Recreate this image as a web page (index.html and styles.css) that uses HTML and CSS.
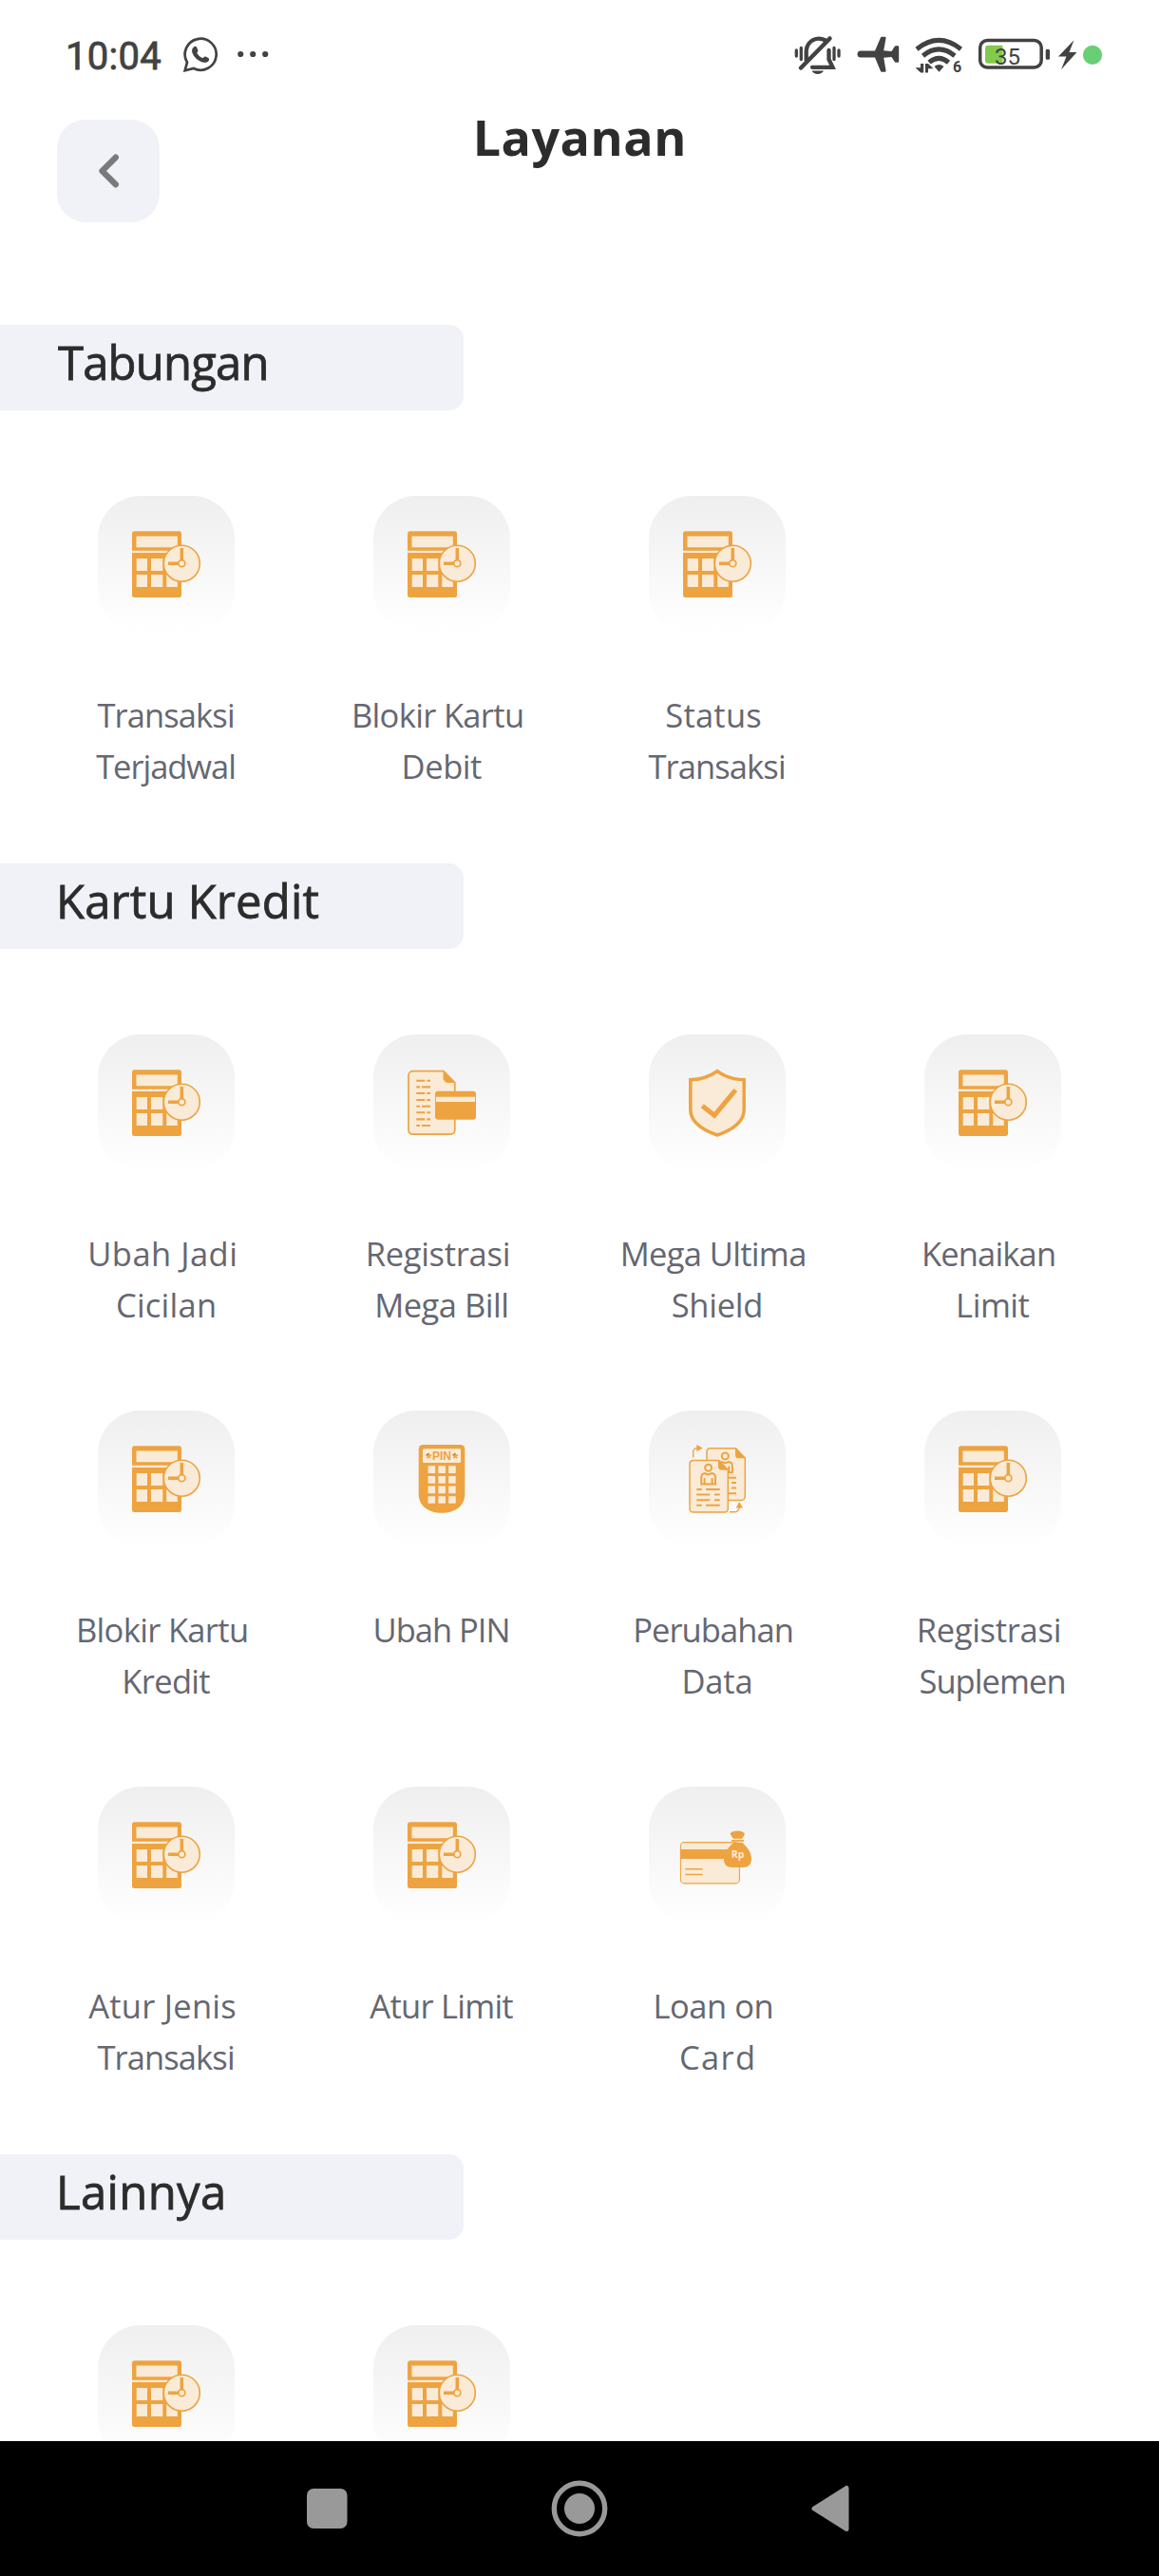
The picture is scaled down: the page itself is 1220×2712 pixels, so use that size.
FILE: index.html
```html
<!DOCTYPE html>
<html lang="id">
<head>
<meta charset="utf-8">
<title>Layanan</title>
<link rel="stylesheet" href="styles.css">
</head>
<body>
<svg class="defs" aria-hidden="true">
  <symbol id="calc" viewBox="0 0 72 72">
    <rect class="o" x="0" y="1.3" width="52" height="69.7" rx="2.5"/>
    <path class="c" d="M0 21.7h40v2.3H0zM4.5 6.5h43.3v11.7H4.5zM4.7 30H16v13H4.7zM20 30h12.3v13H20zM4.7 47H16v13H4.7zM20 47h12.3v13H20zM36.3 47h11.5v13H36.3z"/>
    <circle class="c os" cx="52.3" cy="35.2" r="19" stroke-width="1.6"/>
    <path class="os n" d="M52.3 19v13M38 35.2h11" stroke-width="3.5"/>
    <circle class="c os" cx="52.3" cy="35.2" r="3.5" stroke-width="1.7"/>
  </symbol>
</svg>

<header class="status">
  <span class="time">10:04</span>
  <svg class="wa" viewBox="0 0 37 37"><path fill="none" stroke="#424242" stroke-width="2.700" d="M1.700 35.200L4 26.700A16.500 16.500 0 1 1 10.800 33z"/><path fill="#424242" d="M11 10.500c1-.9 2.500-.9 3 .2l1.400 3.200c.3.900-.2 1.500-1.200 2.700 1.300 2.700 3.400 4.500 6.300 5.700 1.300-1.500 1.900-2.200 2.800-1.800l3 1.500c1.200.7 1 2.200.2 3.200-1.500 1.800-4 2-6.500 1.200C14.500 24.500 11 21 9.500 16.800c-.9-2.500-.4-4.800 1.500-6.300z"/></svg>
  <svg class="dots" viewBox="0 0 33 8"><g fill="#424242"><circle cx="3.300" cy="4" r="3.100"/><circle cx="16.200" cy="4" r="3.100"/><circle cx="29.200" cy="4" r="3.100"/></g></svg>
  <svg class="sys" viewBox="0 0 330 44">
    <g fill="none" stroke="#424242" stroke-width="3.300" stroke-linecap="round">
      <path d="M2.300 15v6M7.300 12.500v12M42 12.500v12M47 15v6"/>
      <path stroke-width="4.300" d="M12.700 25.500V15.500C13.700 4.500 24 0 33 4.500M36.500 15v9.500l4 8.300H19"/>
      <path stroke-width="4.500" d="M7 33.500L37.500 2.500"/>
    </g>
    <path fill="#424242" d="M18.500 36.500h12.500c-2.200 4.600-10.300 4.600-12.500 0z"/>
    <path fill="#424242" d="M70 15.500H85L91 1.500Q91.400.7 92.300.7H95.500Q96.900.7 96.500 2.200L94.200 15.300L102.500 16L105.500 11.200Q106 10.300 107 10.300H109Q110.200 10.300 110.200 11.500V26.500Q110.200 27.700 109 27.700H107Q106 27.700 105.500 26.800L102.500 22L94.200 22.800L96.500 36Q96.900 37.700 95.500 37.700H92.300Q91.400 37.700 91 36.900L85 22.500H70A3.500 3.500 0 0 1 70 15.500z"/>
    <g fill="none" stroke="#424242" stroke-width="5"><path d="M129 13.700q23.200-18.500 46.500 0"/><path d="M135.500 20.700q16.700-13.500 33.500 0"/><path d="M142 27.700q10.200-8.500 20.500 0"/></g>
    <path fill="#424242" d="M147.500 32q5-4 10 0L152.500 37.700zM133 29h3.200v9.500h-3L127.500 33.300H133zM138 29h3l5.500 5.200H141v4.300h-3z"/>
    <text class="six" x="167" y="38">6</text>
    <rect x="195.700" y="4.500" width="64.500" height="28.500" rx="7.500" fill="none" stroke="#424242" stroke-width="3.500"/>
    <path fill="#82ca4c" d="M204 9.700h15.500v19H204a3 3 0 0 1-3-3v-13a3 3 0 0 1 3-3z"/>
    <text class="pct" x="211" y="29.500">35</text>
    <rect x="264.700" y="13.700" width="4.300" height="11" rx="1.500" fill="#424242"/>
    <path fill="#424242" d="M294.500 4.300L278 21.500h8.500L281 35.300 297.500 17H289.500z"/>
    <circle cx="314" cy="19.800" r="10.100" fill="#69cf74"/>
  </svg>
</header>

<div class="appbar">
  <button class="back" aria-label="Kembali"><svg viewBox="0 0 108 108"><path d="M61.800 39.700L47.500 54l14.300 14.300" fill="none" stroke="#7a7a7a" stroke-width="6.300" stroke-linecap="round" stroke-linejoin="round"/></svg></button>
  <h1><span data-w="217.500">Layanan</span></h1>
</div>

<main>
  <section>
    <h2><span data-w="219.500">Tabungan</span></h2>
    <div class="grid">
      <a class="item"><i class="tile"><svg><use href="#calc"/></svg></i><span data-w="143.500">Transaksi</span><span data-w="145">Terjadwal</span></a>
      <a class="item"><i class="tile"><svg><use href="#calc"/></svg></i><span class="broken" data-w="177">Blokir Kartu</span><span data-w="81.500">Debit</span></a>
      <a class="item"><i class="tile"><svg><use href="#calc"/></svg></i><span class="broken" data-w="99">Status</span><span data-w="143.500">Transaksi</span></a>
    </div>
  </section>
  <section>
    <h2><span class="stem" data-w="272.500">Kartu Kredit</span></h2>
    <div class="grid">
      <a class="item"><i class="tile"><svg><use href="#calc"/></svg></i><span class="broken" data-w="153">Ubah Jadi</span><span data-w="102">Cicilan</span></a>
      <a class="item"><i class="tile">
        <svg viewBox="0 0 72 72">
          <path class="c os" d="M5.500 2.700H38L49.800 14.800V64.500a4.700 4.700 0 0 1-4.700 4.700H5.500a4.500 4.500 0 0 1-4.500-4.500V7.200a4.500 4.500 0 0 1 4.500-4.500z" stroke-width="1.700"/>
          <path class="o" d="M37.500 2.500L50.500 15H43a5.500 5.500 0 0 1-5.500-5.500z"/>
          <path class="os n" stroke-width="2.100" d="M9.300 12.800h9M20.300 12.800H24M9.300 19.400H13M15 19.400h9M9.300 26h9M20.300 26H24M9.300 33h9M20.300 33H24M9.300 39.700H13M15 39.700h9M9.300 46.300h9M20.300 46.300H24M9.300 53.400h9M20.300 53.400H24M9.300 60H13M15 60h9"/>
          <rect class="o" x="29" y="23.700" width="43" height="30" rx="3"/>
          <path class="c" d="M30 29.700h41V35H30z"/>
        </svg></i><span class="broken" data-w="148">Registrasi</span><span data-w="136">Mega Bill</span></a>
      <a class="item"><i class="tile">
        <svg viewBox="0 0 72 72">
          <path class="c os" stroke-width="3.500" d="M36 2.700C27.500 8.700 19 11.600 7.800 11.700V43C7.800 54.500 17 63.500 36 70C55 63.500 64.200 54.500 64.200 43V11.700C53 11.600 44.500 8.700 36 2.700z"/>
          <path class="os n" stroke-width="5" d="M20.300 39.200L33 49.300L55.300 22.500"/>
        </svg></i><span class="broken" data-w="191.500">Mega Ultima</span><span data-w="93.500">Shield</span></a>
      <a class="item"><i class="tile"><svg><use href="#calc"/></svg></i><span class="broken" data-w="137">Kenaikan</span><span data-w="74.500">Limit</span></a>
      <a class="item"><i class="tile"><svg><use href="#calc"/></svg></i><span class="broken" data-w="177">Blokir Kartu</span><span data-w="90">Kredit</span></a>
      <a class="item"><i class="tile">
        <svg viewBox="0 0 72 72">
          <path class="o" d="M16.200 0h39.600a4.500 4.500 0 0 1 4.500 4.500V52C60.300 64 50.500 71.800 36 71.800S11.700 64 11.700 52V4.500A4.500 4.500 0 0 1 16.200 0z"/>
          <rect class="c" x="16" y="4.200" width="40" height="14.800" rx="1.500"/>
          <text class="pin-text" x="36" y="16" text-anchor="middle">PIN</text>
          <path class="os" stroke-width="1.500" d="M22.200 8.700v3l-2.800-.9M22.200 11.700l2.800-.9M22.200 11.700l-1.800 2.500M22.200 11.700l1.800 2.500M50.200 8.700v3l-2.800-.9M50.200 11.700l2.800-.9M50.200 11.700l-1.800 2.500M50.200 11.700l1.800 2.500"/>
          <path stroke="#f9ebd7" stroke-width="7.700" stroke-dasharray="7.500 3.300" d="M21.600 26.200h29.100M21.600 36.800h29.100M21.600 47.400h29.100M21.600 58h29.100"/>
        </svg></i><span data-w="139">Ubah PIN</span></a>
      <a class="item"><i class="tile">
        <svg viewBox="0 0 72 72">
          <path class="c os" stroke-width="1.500" d="M28.500 3.800H55.500L65.300 14V54.500a4 4 0 0 1-4 4H28.500a3.500 3.500 0 0 1-3.500-3.500V7.300a3.500 3.500 0 0 1 3.500-3.500z"/>
          <path class="o" d="M55 3.200L66 14.200H58.500a3.500 3.500 0 0 1-3.500-3.500z"/>
          <circle class="os n" cx="44.300" cy="11.900" r="3.500" stroke-width="2"/>
          <path class="os n" stroke-width="2" d="M37 24v-1.500c0-2.700 1.800-4.500 4-4.500 2 1.400 4.500 1.400 6.500 0 2.500 0 4.400 1.800 4.400 5V29.300H47.500M48.300 22.500V29"/>
          <path class="os n" stroke-width="2" d="M47.500 34.700H56M51 40h5M51 45.600h5M47.500 51.200H56"/>
          <path class="c os" stroke-width="1.500" d="M10.500 16.600H37.500L47.300 26.500V67.500a3.500 3.500 0 0 1-3.500 3.500H10.500A3.500 3.500 0 0 1 7 67.500V20.100a3.500 3.500 0 0 1 3.500-3.500z"/>
          <path class="o" d="M37 16L48 26.700H41a4 4 0 0 1-4-4z"/>
          <circle class="os n" cx="26.600" cy="24.200" r="3.500" stroke-width="2"/>
          <path class="os n" stroke-width="2" d="M19.200 41.500V35c0-3 1.700-5 4-5 2 1.600 4.800 1.600 6.800 0 2.300 0 4 2 4 5v6.500zM22.600 35v6.500M30.600 35v6.500"/>
          <path class="os n" stroke-width="2" d="M14.300 47h5.400M24 47h14.700M14.300 52.600h14M33 52.600h5.700M14.300 58.200h14M33 58.200h5.700M14.300 63.700h5.400M24 63.700h14.700"/>
          <path class="os n" stroke-width="1.400" d="M10.700 13.500V8a4 4 0 0 1 4-4.500H16M49 70.800h5a5 5 0 0 0 5.200-5V65"/>
          <path class="o" d="M14.300 0l6.500 3.500-6.500 3.700zM55.700 66.500l3.600-6.500 3.700 6.500z"/>
        </svg></i><span class="broken" data-w="164.500">Perubahan</span><span data-w="70">Data</span></a>
      <a class="item"><i class="tile"><svg><use href="#calc"/></svg></i><span class="broken" data-w="148">Registrasi</span><span data-w="152">Suplemen</span></a>
      <a class="item"><i class="tile"><svg><use href="#calc"/></svg></i><span class="broken" data-w="154">Atur Jenis</span><span data-w="143.500">Transaksi</span></a>
      <a class="item"><i class="tile"><svg><use href="#calc"/></svg></i><span data-w="151">Atur Limit</span></a>
      <a class="item"><i class="tile">
        <svg class="wide" viewBox="-4 0 80 72">
          <rect class="c os" x="-2.600" y="22.600" width="62" height="43.300" rx="4" stroke-width="1.100"/>
          <path class="o" d="M-3 30h56v10H-3z"/>
          <path class="os n" stroke-width="1.500" d="M2.300 50.700h18.400M2.300 56.500h18.400"/>
          <path class="o" d="M49.500 13.500c1.500-2.300 4-3 8-3s6 1 7.500 3c-.8 2.300-2 4-3 5.200H53c-1.200-1.400-2.500-3-3.500-5.200zM53 22.700h9.500C66.500 27 72 32 72 40c0 6-3.500 9-9 9H52c-6 0-9-3-9-8C43 32 49 27.500 53 22.700z"/>
          <path stroke="#f9ebd7" stroke-width="3" d="M50.500 20.700h14"/>
          <path class="os n" stroke-width="1.600" d="M51 20.900h13"/>
          <text class="rp-text" x="57.500" y="39.200" text-anchor="middle">Rp</text>
        </svg></i><span class="broken" data-w="122">Loan on</span><span data-w="76">Card</span></a>
    </div>
  </section>
  <section>
    <h2><span class="stem" data-w="172">Lainnya</span></h2>
    <div class="grid">
      <a class="item"><i class="tile"><svg><use href="#calc"/></svg></i></a>
      <a class="item"><i class="tile"><svg><use href="#calc"/></svg></i></a>
    </div>
  </section>
</main>

<nav class="navbar">
  <svg viewBox="0 0 1220 142" fill="#999">
    <rect x="323" y="50" width="42.500" height="42" rx="7"/>
    <circle cx="610" cy="71" r="26.700" fill="none" stroke="#999" stroke-width="5.400"/>
    <circle cx="610" cy="71" r="16"/>
    <path d="M857 71L891 49.500V92.500z" stroke="#999" stroke-width="5" stroke-linejoin="round"/>
  </svg>
</nav>
<script src="fit.js"></script>
</body>
</html>
```
FILE: styles.css
```css
* { box-sizing: border-box; }
body {
  margin: 0;
  width: 1220px;
  height: 2712px;
  overflow: hidden;
  display: flex;
  flex-direction: column;
  background: #fff;
  font-family: "Open Sans", sans-serif;
  color: #2c2c2c;
}
.defs { position: absolute; width: 0; height: 0; }
.o { fill: #eea341; }
.c { fill: #f9ebd7; }
.os { stroke: #eea341; }
.n { fill: none; }

.status {
  flex: none;
  height: 126px;
  padding: 38px 54px 0 69px;
  display: flex;
  align-items: flex-start;
}
.time {
  width: 124px;
  font: 400 40px/44px Roboto, sans-serif;
  color: #424242;
  letter-spacing: .3px;
  -webkit-text-stroke: .8px #424242;
}
.wa { width: 37px; height: 37px; margin-top: 1px; }
.dots { width: 33px; height: 8px; margin: 15px 0 0 20px; }
.sys { width: 330px; height: 44px; margin-left: auto; overflow: visible; }
.six { font: 700 16px Roboto, sans-serif; fill: #424242; }
.pct { font: 400 24px Roboto, sans-serif; fill: #424242; }

.appbar {
  flex: none;
  height: 216px;
  padding: 0 60px;
  display: grid;
  grid-template-columns: 108px 1fr 108px;
  align-items: start;
}
.back {
  width: 108px;
  height: 108px;
  padding: 0;
  border: 0;
  border-radius: 30px;
  background: #f1f2f8;
}
.back svg { display: block; width: 108px; height: 108px; }
h1 {
  margin: -17px 0 0;
  text-align: center;
  font-size: 52px;
  line-height: 70px;
  font-weight: 700;
}
h1 span, h2 span { display: inline-block; white-space: nowrap; }

main { flex: 1; min-height: 0; overflow: hidden; }
h2 {
  margin: 0 0 90px;
  width: 488px;
  height: 90px;
  padding-left: 61px;
  border-radius: 0 15px 15px 0;
  background: #f1f2f8;
  font-size: 49px;
  line-height: 79px;
  font-weight: 400;
  -webkit-text-stroke: .8px #2c2c2c;
}
h2 .stem { margin-left: -2px; }
.grid {
  display: grid;
  grid-template-columns: repeat(4, 290px);
  grid-auto-rows: 396px;
  padding-left: 30px;
  margin-bottom: -9px;
}
.item {
  display: flex;
  flex-direction: column;
  align-items: center;
  font-size: 34.5px;
  line-height: 54px;
  color: #656771;
  white-space: nowrap;
}
.broken { position: relative; left: -4px; }
.tile {
  width: 144px;
  height: 144px;
  margin-bottom: 60px;
  padding: 36px;
  border-radius: 45px;
  background: linear-gradient(#efefef, #fff);
}
.tile svg { display: block; width: 72px; height: 72px; }
.tile .wide { width: 80px; margin-left: -4px; }
.pin-text { font: 700 12px "Liberation Sans", sans-serif; fill: #eea341; }
.rp-text { font: 700 10.500px "Open Sans", sans-serif; fill: #f9ebd7; }

.navbar { flex: none; height: 142px; background: #000; }
.navbar svg { display: block; width: 1220px; height: 142px; }
```
FILE: fit.js
```js
// Tracks each label out or in so that it takes its nominal width.
const ctx = document.createElement('canvas').getContext('2d');
document.querySelectorAll('[data-w]').forEach((el) => {
  const cs = getComputedStyle(el);
  ctx.font = `${cs.fontWeight} ${cs.fontSize} ${cs.fontFamily}`;
  const m = ctx.measureText(el.textContent);
  const ink = m.actualBoundingBoxRight + m.actualBoundingBoxLeft;
  const spacing = (Number(el.dataset.w) - ink) / (el.textContent.length - 1);
  el.style.letterSpacing = `${spacing}px`;
  el.style.marginRight = `${-spacing}px`;
});
```
